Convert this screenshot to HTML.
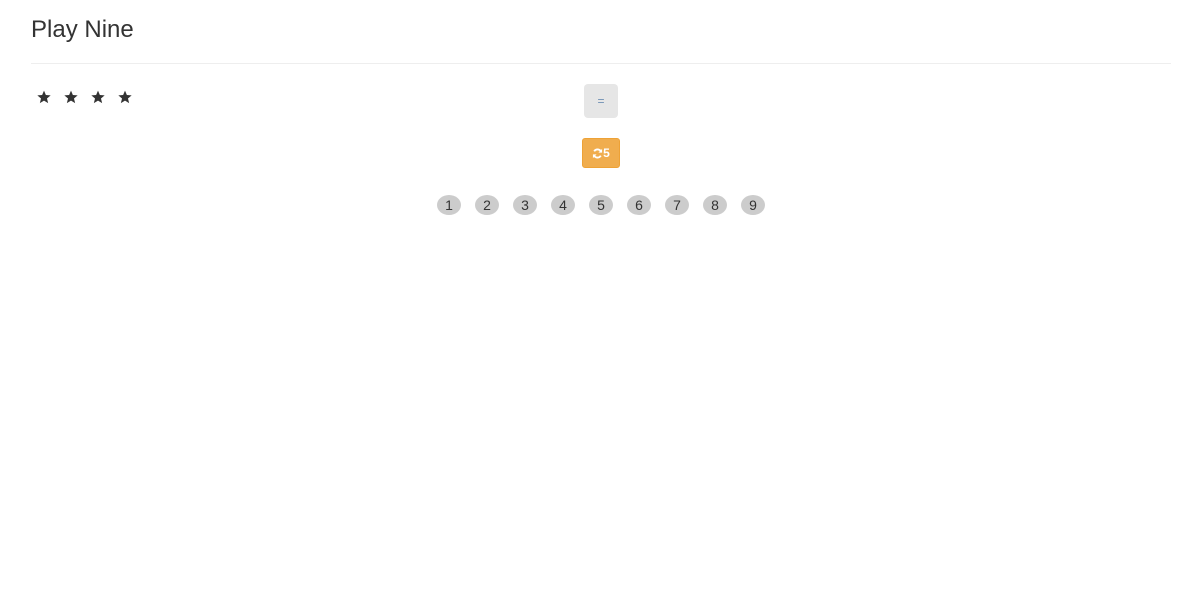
<!DOCTYPE html>
<html><head><style>
body{margin:0;background:#fff;font-family:"Liberation Sans",sans-serif;color:#333;width:1181px;height:612px;overflow:hidden;position:relative}
h3{position:absolute;left:31px;top:15px;margin:0;font-size:24px;font-weight:normal;line-height:30px}
.hr{position:absolute;left:31px;top:63px;width:1140px;height:1px;background:#eee}
.star{position:absolute;top:90px;width:14px;height:14px}
.eq{position:absolute;left:584px;top:84px;width:34px;height:34px;background:#e6e6e6;border-radius:4px;color:#6f8fb3;font-size:12px;text-align:center;line-height:34px}
.ref{position:absolute;left:582px;top:138px;width:38px;height:30px;box-sizing:border-box;background:#f0ad4e;border:1px solid #eea236;border-radius:3px;color:#fff;font-size:12px;font-weight:bold;display:flex;align-items:center;justify-content:center}
.n{position:absolute;top:195px;width:24px;height:20px;border-radius:50%;background:#ccc;text-align:center;line-height:20px;font-size:14px;color:#333}
</style></head><body>
<h3>Play Nine</h3>
<div class="hr"></div>
<svg class="star" style="left:37px" viewBox="0 0 24 24"><path d="M12 1l3.2 7.6 8.2.6-6.3 5.3 2 8L12 18.2 4.9 22.5l2-8L.6 9.2l8.2-.6z" fill="#333"/></svg>
<svg class="star" style="left:64px" viewBox="0 0 24 24"><path d="M12 1l3.2 7.6 8.2.6-6.3 5.3 2 8L12 18.2 4.9 22.5l2-8L.6 9.2l8.2-.6z" fill="#333"/></svg>
<svg class="star" style="left:91px" viewBox="0 0 24 24"><path d="M12 1l3.2 7.6 8.2.6-6.3 5.3 2 8L12 18.2 4.9 22.5l2-8L.6 9.2l8.2-.6z" fill="#333"/></svg>
<svg class="star" style="left:118px" viewBox="0 0 24 24"><path d="M12 1l3.2 7.6 8.2.6-6.3 5.3 2 8L12 18.2 4.9 22.5l2-8L.6 9.2l8.2-.6z" fill="#333"/></svg>
<div class="eq">=</div>
<div class="ref"><svg width="11" height="11" viewBox="0 0 12 12"><path d="M10 4.5A4.2 4.2 0 0 0 2.4 3.6M2 7.5a4.2 4.2 0 0 0 7.6.9" stroke="#fff" stroke-width="2" fill="none"/><path d="M11 1v4H7zM1 11V7h4z" fill="#fff"/></svg>5</div>
<div class="n" style="left:437px">1</div>
<div class="n" style="left:475px">2</div>
<div class="n" style="left:513px">3</div>
<div class="n" style="left:551px">4</div>
<div class="n" style="left:589px">5</div>
<div class="n" style="left:627px">6</div>
<div class="n" style="left:665px">7</div>
<div class="n" style="left:703px">8</div>
<div class="n" style="left:741px">9</div>
</body></html>
